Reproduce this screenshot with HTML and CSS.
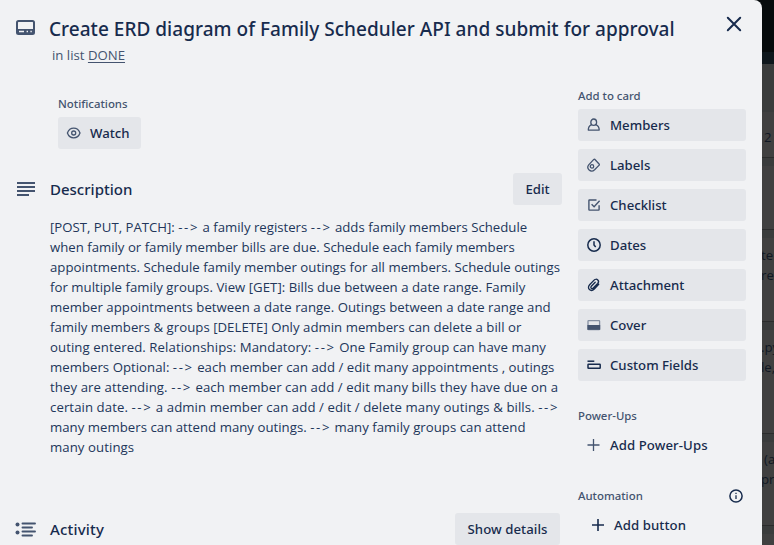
FILE: index.html
```
<!DOCTYPE html>
<html lang="en">
<head>
<meta charset="utf-8">
<title>Create ERD diagram of Family Scheduler API and submit for approval</title>
<link rel="stylesheet" href="styles.css">
</head>
<body>
<div class="board" aria-hidden="true">
  <div class="board-nav"></div>
  <div class="board-bar"></div>
  <div class="board-list">
    <div class="tile tile-a"><p class="ind">2</p></div>
    <div class="tile tile-b"></div>
    <div class="tile tile-c"><p>te</p><p>rea</p></div>
    <div class="tile tile-d"><p>.py</p><p>le,</p></div>
    <div class="tile tile-c"><p class="ind">(a</p><p>pro</p></div>
    <div class="tile tile-b"></div>
  </div>
</div>
<main class="dialog">
  <header class="head">
    <svg class="head-icon" width="19" height="15" viewBox="0 0 19 15"><rect x="1" y="1" width="17" height="13" rx="1.5" fill="none" stroke="#44546f" stroke-width="2"/><path fill="#44546f" fill-rule="evenodd" d="M1 9h17v5H1zM3 10.800h5v1.400H3zM10.600 10.800h1.400v1.400h-1.400zM14.400 10.800h1.400v1.400h-1.400z"/></svg>
    <div class="head-text">
      <h1>Create ERD diagram of Family Scheduler API and submit for approval</h1>
      <p>in list <a>DONE</a></p>
    </div>
    <svg class="close" width="16" height="16" viewBox="0 0 16 16"><path d="M1.800 1.800l12.400 12.400M14.200 1.800L1.800 14.200" fill="none" stroke="#172b4d" stroke-width="2" stroke-linecap="round"/></svg>
  </header>
  <div class="columns">
    <div class="content">
      <section class="notify">
        <h3>Notifications</h3>
        <button class="btn watch"><svg width="16" height="16" viewBox="0 0 16 16" fill="none" stroke="#44546f" stroke-width="1.300"><path d="M1.400 8C2.500 5 5 3.200 7.700 3.200S12.900 5 14 8C12.900 11 10.500 12.800 7.700 12.800S2.500 11 1.400 8z"/><circle cx="7.700" cy="8" r="2"/></svg>Watch</button>
      </section>
      <section class="desc">
        <div class="section-head">
          <svg width="20" height="16" viewBox="0 0 20 16"><path d="M2 2h16M2 6h16M2 10h16M2 14h10" stroke="#44546f" stroke-width="2" stroke-linecap="square"/></svg>
          <h2>Description</h2>
          <button class="btn edit">Edit</button>
        </div>
        <div class="prose">
          <span>[POST, PUT, PATCH]: <i>--&gt;</i> a family registers <i>--&gt;</i> adds family members Schedule</span>
          <span>when family or family member bills are due. Schedule each family members</span>
          <span class="loose">appointments. Schedule family member outings for all members. Schedule outings</span>
          <span class="loose">for multiple family groups. View [GET]: Bills due between a date range. Family</span>
          <span class="loose">member appointments between a date range. Outings between a date range and</span>
          <span class="loose">family members &amp; groups [DELETE] Only admin members can delete a bill or</span>
          <span class="looser">outing entered. Relationships: Mandatory: <i>--&gt;</i> One Family group can have many</span>
          <span class="loose">members Optional: <i>--&gt;</i> each member can add / edit many appointments , outings</span>
          <span class="looser">they are attending. <i>--&gt;</i> each member can add / edit many bills they have due on a</span>
          <span class="looser">certain date. <i>--&gt;</i> a admin member can add / edit / delete many outings &amp; bills. <i>--&gt;</i></span>
          <span class="loose">many members can attend many outings. <i>--&gt;</i> many family groups can attend</span>
          <span class="looser">many outings</span>
        </div>
      </section>
      <section class="section-head activity">
        <svg width="22" height="16" viewBox="0 0 22 16"><g fill="#44546f"><circle cx="2.500" cy="3.500" r="2"/><circle cx="2.500" cy="11.500" r="2"/></g><path d="M7.500 2.500H20M7.500 6.500H17M7.500 10.500H20M7.500 14.500H17" stroke="#44546f" stroke-width="1.900" stroke-linecap="round"/></svg>
        <h2>Activity</h2>
        <button class="btn details">Show details</button>
      </section>
    </div>
    <aside class="side">
      <h3>Add to card</h3>
      <div class="actions">
        <button class="btn"><svg width="16" height="16" viewBox="0 0 16 16" fill="none" stroke="#44546f" stroke-width="1.300"><ellipse cx="7.700" cy="5.200" rx="2.900" ry="3.200"/><path d="M5.600 7.700C3.500 8.600 2.300 10.400 2.300 13.100H13.200C13.200 10.400 12 8.600 9.800 7.700" stroke-linejoin="round"/></svg>Members</button>
        <button class="btn"><svg width="16" height="16" viewBox="0 0 16 16" fill="none" stroke="#44546f" stroke-width="1.300" stroke-linejoin="round"><path d="M8.700 2.300L13.300 7.300Q13.600 7.700 13.200 8.100L8.600 12.800C6.800 14.500 4.400 14.300 2.900 12.800C1.500 11.300 1.500 9.400 2.700 7.900L7.800 2.400Q8.300 2 8.700 2.300z"/><circle cx="6" cy="9.400" r="1.700"/></svg>Labels</button>
        <button class="btn"><svg width="16" height="16" viewBox="0 0 16 16" fill="none" stroke="#44546f" stroke-width="1.400"><path d="M10.500 3H3.400Q2.900 3 2.900 3.500V12.600Q2.900 13.100 3.400 13.100H12.600Q13.100 13.100 13.100 12.600V8.300"/><path d="M5.600 7.300L8.100 9.800L13.600 3.700"/></svg>Checklist</button>
        <button class="btn"><svg width="16" height="16" viewBox="0 0 16 16" fill="none" stroke="#172b4d" stroke-width="1.500"><circle cx="8" cy="8" r="6.200"/><path d="M8 4.200V8L9.700 10"/></svg>Dates</button>
        <button class="btn"><svg width="16" height="16" viewBox="0 0 16 16" fill="none" stroke="#172b4d" stroke-width="1.350" stroke-linecap="round"><path d="M12.700 7.300L8.300 12C6.800 13.500 4.700 13.700 3.400 12.500C2.100 11.300 2.200 9.200 3.600 7.700L8.100 3.100C9.100 2.100 10.800 2 11.800 3C12.800 4 12.600 5.500 11.700 6.500L7.300 11C6.700 11.700 5.800 11.700 5.200 11.200C4.700 10.600 4.800 9.800 5.300 9.200L9.200 5.200"/></svg>Attachment</button>
        <button class="btn"><svg width="16" height="16" viewBox="0 0 16 16"><rect x="2" y="3.600" width="11.600" height="9" rx=".6" fill="none" stroke="#8590a2" stroke-width="1.300"/><path d="M1.400 8h12.800v4.800H1.400z" fill="#44546f"/></svg>Cover</button>
        <button class="btn"><svg width="16" height="16" viewBox="0 0 16 16" fill="none" stroke="#172b4d" stroke-width="1.500"><path d="M1.500 4.200H8.300"/><rect x="2" y="7.300" width="12.200" height="4" rx=".5"/></svg>Custom Fields</button>
      </div>
      <h3 class="gap">Power-Ups</h3>
      <button class="btn plain"><svg width="16" height="16" viewBox="0 0 16 16"><path d="M7.500 2v12M1.500 8h12" stroke="#44546f" stroke-width="1.300"/></svg>Add Power-Ups</button>
      <h3 class="gap auto">Automation<svg width="16" height="16" viewBox="0 0 16 16" fill="none" stroke="#172b4d"><circle cx="8" cy="8" r="6.100" stroke-width="1.500"/><path d="M8 7.200V11M8 4.800v1.300" stroke-width="1.300"/></svg></h3>
      <button class="btn plain wide"><svg width="16" height="16" viewBox="0 0 16 16"><path d="M8 2v12M2 8h12" stroke="#172b4d" stroke-width="1.600"/></svg>Add button</button>
    </aside>
  </div>
</main>
</body>
</html>
```
FILE: styles.css
```
* { box-sizing: border-box; }
body {
  margin: 0;
  height: 545px;
  overflow: hidden;
  background: #3d3e3e;
  color: #172b4d;
  font: 13.2px/20px "Open Sans", "Noto Sans", sans-serif;
}
h1, h2, h3, p { margin: 0; }
svg { flex: none; display: block; }

/* dimmed board underneath the dialog */
.board {
  position: absolute;
  top: 0;
  right: 0;
  width: 34px;
  height: 545px;
  overflow: hidden;
}
.board-nav { height: 52px; background: #060b0c; }
.board-bar { height: 12px; background: #0e171c; }
.board-list { background: #3a3c3c; height: 481px; }
.tile {
  margin-bottom: 8px;
  padding: 16px 0 0 21px;
  background: #404040;
  border-bottom: 1px solid #2b2c2c;
  color: #101823;
  white-space: nowrap;
}
.tile .ind { padding-left: 3px; }
.tile-a { height: 94px; padding-top: 63px; background: linear-gradient(#3a3c3c 48px, #404040 48px); }
.tile-b { height: 64px; }
.tile-c { height: 84px; padding-top: 7px; }
.tile-d { height: 104px; padding-top: 7px; }

.dialog {
  position: relative;
  width: 762px;
  height: 545px;
  overflow: hidden;
  border-radius: 0 8px 0 0;
  background: #f1f2f4;
}
.head { display: flex; height: 88px; padding-left: 16px; }
.head-icon { margin-top: 20px; }
.head-text { flex: 1; margin-left: 14px; padding-top: 15px; }
h1 {
  font: 500 19px/28px "Noto Sans", sans-serif;
  letter-spacing: 0.025px;
  white-space: nowrap;
}
.head-text p { margin: 2px 0 0 3px; color: #44546f; }
.head-text a { text-decoration: underline; text-underline-offset: 2px; }
.close { margin: 16px 20px 0 0; }

.columns { display: flex; }
.content { width: 578px; padding: 6px 16px 0; }
.notify { padding-left: 42px; }
h3 {
  height: 20px;
  color: #44546f;
  font: 500 11.4px/20px "Noto Sans", sans-serif;
}
.btn {
  display: flex;
  align-items: center;
  height: 32px;
  padding: 0 8px;
  border: 0;
  border-radius: 3px;
  background: #e4e6ea;
  color: #172b4d;
  font: 500 13.2px/20px "Noto Sans", sans-serif;
  white-space: nowrap;
}
.watch { width: 83px; margin-top: 3px; }
.watch svg { margin-right: 8px; }

.section-head { display: flex; align-items: center; height: 32px; }
.desc { margin-top: 24px; }
h2 { margin-left: 14px; font: 500 15px/20px "Noto Sans", sans-serif; }
.section-head .btn { margin-left: auto; justify-content: center; }
.edit { width: 49px; }
.prose { margin: 12px 0 0 34px; color: #22365a; }
.prose span { display: block; white-space: nowrap; }
.prose .loose { letter-spacing: 0.03px; }
.prose .looser { letter-spacing: 0.08px; }
.prose i { font-style: normal; letter-spacing: 1.6px; }
.activity { margin-top: 56px; }
.activity > svg { margin-left: -1px; }
.activity h2 { margin-left: 13px; letter-spacing: 0.17px; }
.activity .details { width: 105px; margin-right: 2px; letter-spacing: 0.06px; }

.side { width: 168px; margin-top: -2px; }
.actions { display: grid; gap: 8px; margin-top: 3px; }
.side .btn { width: 168px; }
.side .btn svg { margin-right: 8px; }
.side .gap { margin-top: 25px; }
.side .plain { margin-top: 3px; background: none; letter-spacing: 0.08px; }
.side .auto { display: flex; align-items: center; justify-content: space-between; padding-right: 2px; }
.side .wide { padding-left: 12px; }
```
